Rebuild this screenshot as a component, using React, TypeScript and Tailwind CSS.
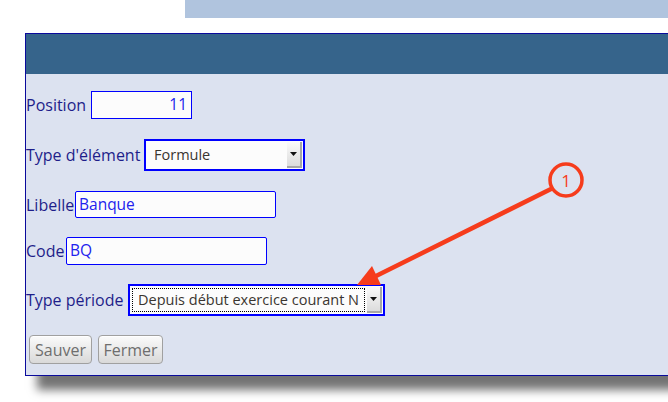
import React from "react";

const font = { fontFamily: '"Open Sans", "Noto Sans", sans-serif' };

function SelectBox({ value, width, focused }: { value: string; width: string; focused?: boolean }) {
  return (
    <div className={`flex h-[32px] ${width} items-stretch border-2 border-[#0000ff] bg-[#fcfcfc]`}>
      <div className="flex min-w-0 flex-1 items-center p-[2px]">
        <div
          className={`flex h-full flex-1 items-center overflow-hidden whitespace-nowrap pl-[5px] text-[14.5px] text-[#3a3530] ${
            focused ? "border border-dotted border-black" : "border border-transparent"
          }`}
        >
          {value}
        </div>
      </div>
      <div className="my-[1px] mr-[1px] flex w-[15px] items-center justify-center border-r-2 border-b-2 border-[#a8a8a8] bg-gradient-to-b from-[#fafafa] to-[#dcdcdc]">
        <svg width="7" height="4" viewBox="0 0 7 4">
          <path d="M0 0 L7 0 L3.5 4 Z" fill="#111" />
        </svg>
      </div>
    </div>
  );
}

function Btn({ label, width }: { label: string; width: string }) {
  return (
    <div
      className={`flex h-[29px] ${width} items-center justify-center rounded-[4px] border border-[#a0a0a0] bg-gradient-to-b from-[#fbfbfb] to-[#d9d9d9] text-[16px] text-[#6e6e6e] shadow-[inset_0_1px_0_#ffffff]`}
    >
      {label}
    </div>
  );
}

export default function App() {
  return (
    <div className="relative h-[402px] w-[668px] overflow-hidden bg-white" style={font}>
      <div className="ml-[185px] h-[18px] bg-[#b0c4de]" />
      <div className="ml-[25px] mt-[15px] w-[680px] border border-[#0a0a9c] bg-[#dce2f0] shadow-[12px_14px_9px_rgba(0,0,0,0.55)]">
        <div className="h-[40px] bg-[#36648b]" />
        <div className="flex flex-col pb-[11px] text-[16px] text-[#1e1e8a]">
          <div className="mt-[17px] flex items-center">
            <span className="w-[65px] whitespace-nowrap">Position</span>
            <div className="flex h-[28px] w-[101px] items-center justify-end border border-[#0000ff] bg-[#fcfcfc] pr-[4px] text-[15.5px] text-[#2222ee]">
              11
            </div>
          </div>
          <div className="mt-[20px] flex items-center">
            <span className="w-[118px] whitespace-nowrap">Type d'élément</span>
            <SelectBox value="Formule" width="w-[161px]" />
          </div>
          <div className="mt-[20px] flex items-center">
            <span className="w-[49px] whitespace-nowrap">Libelle</span>
            <div className="flex h-[27px] w-[201px] items-center rounded-[2px] border border-[#0000ff] bg-[#fcfcfc] pl-[3px] text-[15.5px] text-[#2222ee]">
              Banque
            </div>
          </div>
          <div className="mt-[19px] flex items-center">
            <span className="w-[40px] whitespace-nowrap">Code</span>
            <div className="flex h-[28px] w-[201px] items-center rounded-[2px] border border-[#0000ff] bg-[#fcfcfc] pl-[3px] text-[15.5px] text-[#2222ee]">
              BQ
            </div>
          </div>
          <div className="mt-[19px] flex items-center">
            <span className="w-[102px] whitespace-nowrap">Type période</span>
            <SelectBox value="Depuis début exercice courant N" width="w-[257px]" focused />
          </div>
          <div className="ml-[3px] mt-[19px] flex gap-[6px]">
            <Btn label="Sauver" width="w-[63px]" />
            <Btn label="Fermer" width="w-[65px]" />
          </div>
        </div>
      </div>
      <svg className="pointer-events-none absolute left-0 top-0" width="668" height="402" viewBox="0 0 668 402">
        <line x1="551" y1="189" x2="374" y2="277" stroke="#f63c1c" strokeWidth="4.5" strokeLinecap="round" />
        <polygon points="357,285 372,266 381,285" fill="#f63c1c" />
        <circle cx="566" cy="180" r="16" fill="#dce2f0" stroke="#f63c1c" strokeWidth="3.5" />
        <text x="566" y="186.5" textAnchor="middle" fontSize="17" fill="#f63c1c" style={font}>
          1
        </text>
      </svg>
    </div>
  );
}
